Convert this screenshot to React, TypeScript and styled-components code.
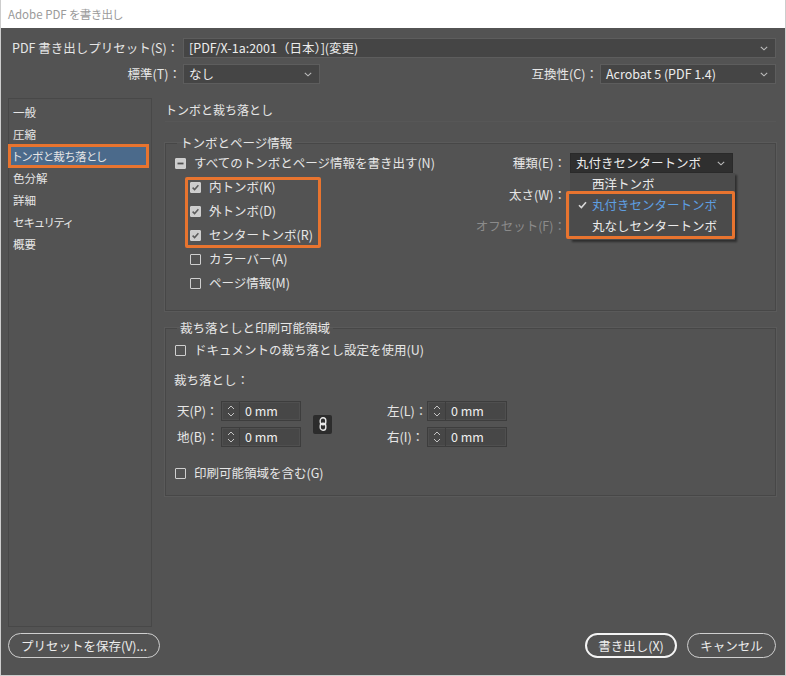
import React from "react";
import styled, { createGlobalStyle } from "styled-components";

const ORANGE = "#e8742f";

const GlobalStyle = createGlobalStyle`
  html, body { margin: 0; padding: 0; background: #ffffff; }
  body {
    font-family: "Noto Sans CJK JP", "Noto Sans", sans-serif;
  }
  #root { width: 786px; height: 676px; }
`;

const Window = styled.div`
  width: 786px;
  height: 676px;
  box-sizing: border-box;
  border: 1px solid #cdcdcd;
  border-top: none;
  display: flex;
  flex-direction: column;
  background: #535353;
  color: #e6e6e6;
  font-size: 12.5px;
  line-height: 16px;
`;

const TitleBar = styled.div`
  height: 28px;
  flex: none;
  background: #ffffff;
  display: flex;
  align-items: center;
  padding-left: 7px;
  color: #9a9a9a;
  font-size: 11.5px;
  font-feature-settings: "palt";
`;

const Header = styled.div`
  display: grid;
  grid-template-columns: 171px 137px 1fr 176px;
  grid-auto-rows: 20px;
  column-gap: 2px;
  row-gap: 6px;
  padding: 10px 9px 0 9px;
  align-items: center;
`;

const FieldLabel = styled.div<{ $align?: "left" | "right"; $dim?: boolean }>`
  text-align: ${(p) => p.$align ?? "right"};
  padding-left: ${(p) => (p.$align === "left" ? "2px" : "0")};
  white-space: nowrap;
  color: ${(p) => (p.$dim ? "#8b8b8b" : "#e6e6e6")};
`;

const SelectBox = styled.div<{ $span?: number; $dark?: boolean }>`
  grid-column: span ${(p) => p.$span ?? 1};
  position: relative;
  height: 20px;
  box-sizing: border-box;
  display: flex;
  align-items: center;
  justify-content: space-between;
  padding: 0 7px 0 5px;
  background: ${(p) => (p.$dark ? "#2f2f2f" : "#454545")};
  border: 1px solid ${(p) => (p.$dark ? "#2a2a2a" : "#5d5d5d")};
  color: #ececec;
  white-space: nowrap;
`;

const Chevron = () => (
  <svg width="8" height="5" viewBox="0 0 8 5">
    <polyline points="0.8,0.8 4,3.8 7.2,0.8" fill="none" stroke="#bdbdbd" strokeWidth="1.1" />
  </svg>
);

const Content = styled.div`
  flex: 1;
  display: grid;
  grid-template-columns: 144px 1fr;
  column-gap: 13px;
  padding: 14px 9px 0 7px;
  min-height: 0;
`;

const Sidebar = styled.div`
  border: 1px solid #484848;
  padding: 2px 3px 0 0;
  display: flex;
  flex-direction: column;
`;

const NavItem = styled.div<{ $active?: boolean }>`
  height: 22px;
  display: flex;
  align-items: center;
  padding-left: 4px;
  font-size: 11.5px;
  font-feature-settings: "palt";
  color: #e6e6e6;
  background: ${(p) => (p.$active ? "#4b6a8b" : "transparent")};
  outline: ${(p) => (p.$active ? `3px solid ${ORANGE}` : "none")};
  outline-offset: -2px;
`;

const Main = styled.div`
  display: flex;
  flex-direction: column;
`;

const PageTitle = styled.div`
  height: 23px;
  display: flex;
  align-items: center;
  border-bottom: 1px solid #575757;
  font-size: 12px;
`;

const Group = styled.fieldset<{ $mt: number }>`
  margin: ${(p) => p.$mt}px 0 0 0;
  padding: 0;
  border: 1px solid #474747;
  box-shadow: 0 0 0 1px #5a5a5a;
  min-width: 0;
`;

const Legend = styled.legend`
  margin-left: 11px;
  padding: 0 3px;
  line-height: 16px;
`;

const Group1Body = styled.div`
  display: flex;
  justify-content: space-between;
  padding: 0 42px 15px 9px;
`;

const Column = styled.div`
  display: flex;
  flex-direction: column;
`;

const CheckRow = styled.div<{ $indent?: boolean }>`
  height: 24px;
  display: flex;
  align-items: center;
  gap: 8px;
  padding-left: ${(p) => (p.$indent ? "15px" : "0")};
  white-space: nowrap;
`;

const Box = styled.span<{ $filled?: boolean }>`
  width: 11px;
  height: 11px;
  flex: none;
  box-sizing: border-box;
  border: 1px solid #cfcfcf;
  background: ${(p) => (p.$filled ? "#cdcdcd" : "transparent")};
  border-radius: 1px;
  display: flex;
  align-items: center;
  justify-content: center;
`;

type CheckState = "on" | "off" | "mixed";

const Checkbox = ({ state }: { state: CheckState }) => (
  <Box $filled={state !== "off"}>
    {state === "on" && (
      <svg width="9" height="9" viewBox="0 0 9 9">
        <polyline points="1.6,4.6 3.6,6.6 7.4,2.2" fill="none" stroke="#5b5b5b" strokeWidth="1.5" />
      </svg>
    )}
    {state === "mixed" && (
      <svg width="9" height="9" viewBox="0 0 9 9">
        <rect x="1.5" y="3.6" width="6" height="1.8" fill="#505050" />
      </svg>
    )}
  </Box>
);

const Check = ({ state, label, indent }: { state: CheckState; label: string; indent?: boolean }) => (
  <CheckRow $indent={indent}>
    <Checkbox state={state} />
    <span>{label}</span>
  </CheckRow>
);

const Highlighted = styled.div`
  position: relative;
  &::after {
    content: "";
    position: absolute;
    left: 10px;
    top: 2px;
    width: 136px;
    height: 71px;
    box-sizing: border-box;
    border: 3px solid ${ORANGE};
    border-radius: 2px;
    pointer-events: none;
  }
`;

const RightGrid = styled.div`
  display: grid;
  grid-template-columns: auto 163px;
  grid-auto-rows: 20px;
  column-gap: 4px;
  row-gap: 11.5px;
  margin-top: 2px;
  align-items: center;
`;

const Dropdown = styled.div`
  position: absolute;
  left: -1px;
  top: 19px;
  width: 165px;
  box-sizing: border-box;
  padding-bottom: 4px;
  background: #4b4b4b;
  box-shadow: 2px 2px 2px rgba(0, 0, 0, 0.45);
  z-index: 2;
`;

const Option = styled.div<{ $selected?: boolean }>`
  height: 21px;
  display: flex;
  align-items: center;
  color: ${(p) => (p.$selected ? "#5e9fe2" : "#ececec")};
`;

const CheckSlot = styled.span`
  width: 22px;
  flex: none;
  display: flex;
  justify-content: center;
  padding-left: 2px;
  box-sizing: border-box;
`;

const OptionHighlight = styled.div`
  position: relative;
  &::after {
    content: "";
    position: absolute;
    left: -4px;
    top: -3px;
    width: 169px;
    height: 48px;
    box-sizing: border-box;
    border: 3px solid ${ORANGE};
    border-radius: 2px;
    pointer-events: none;
  }
`;

const Placeholder = styled.div`
  height: 20px;
  background: #454545;
  border: 1px solid #5d5d5d;
  box-sizing: border-box;
`;

const Group2Body = styled.div`
  display: flex;
  flex-direction: column;
  padding: 2px 9px 10px 9px;
`;

const PlainRow = styled.div<{ $mt: number }>`
  height: 24px;
  display: flex;
  align-items: center;
  margin-top: ${(p) => p.$mt}px;
  margin-left: -1px;
`;

const SpinGrid = styled.div`
  display: grid;
  grid-template-columns: 46px 80px 84px 42px 80px;
  grid-template-rows: 20px 20px;
  row-gap: 6px;
  margin-top: 9px;
  align-items: center;
`;

const Spinner = styled.div`
  height: 20px;
  box-sizing: border-box;
  display: flex;
  align-items: stretch;
  background: #474747;
  border: 1px solid #3d3d3d;
  box-shadow: inset 0 0 0 1px #4f4f4f;
`;

const SpinArrows = styled.div`
  width: 17px;
  flex: none;
  border-right: 1px solid #3d3d3d;
  display: flex;
  align-items: center;
  justify-content: center;
`;

const SpinValue = styled.div`
  display: flex;
  align-items: center;
  padding-left: 5px;
  color: #efefef;
`;

const SpinField = ({ value }: { value: string }) => (
  <Spinner>
    <SpinArrows>
      <svg width="8" height="14" viewBox="0 0 8 14">
        <polyline points="1,5 4,2 7,5" fill="none" stroke="#c4c4c4" strokeWidth="1" />
        <polyline points="1,9 4,12 7,9" fill="none" stroke="#c4c4c4" strokeWidth="1" />
      </svg>
    </SpinArrows>
    <SpinValue>{value}</SpinValue>
  </Spinner>
);

const LinkButton = styled.div`
  grid-column: 3;
  grid-row: 1 / span 2;
  justify-self: start;
  margin-left: 12px;
  width: 19px;
  height: 19px;
  border-radius: 2px;
  background: #2c2c2c;
  display: flex;
  align-items: center;
  justify-content: center;
`;

const CheckRowSpaced = styled.div`
  margin-top: 14px;
`;

const Footer = styled.div`
  flex: none;
  display: flex;
  align-items: center;
  gap: 10px;
  padding: 6px 9px 17px 7px;
`;

const Pill = styled.button<{ $primary?: boolean; $w: number }>`
  height: 25px;
  width: ${(p) => p.$w}px;
  box-sizing: border-box;
  border-radius: 13px;
  background: transparent;
  border: ${(p) => (p.$primary ? "2px solid #f4f4f4" : "1px solid #cfcfcf")};
  color: #ececec;
  font-family: inherit;
  font-size: 12.5px;
  line-height: 16px;
  padding: 0;
  white-space: nowrap;
`;

const Spacer = styled.div`
  flex: 1;
`;

export default function App() {
  const nav = ["一般", "圧縮", "トンボと裁ち落とし", "色分解", "詳細", "セキュリティ", "概要"];
  return (
    <>
      <GlobalStyle />
      <Window>
        <TitleBar>Adobe PDF を書き出し</TitleBar>
        <Header>
          <FieldLabel $align="left">PDF 書き出しプリセット(S)：</FieldLabel>
          <SelectBox $span={3}>
            <span>[PDF/X-1a:2001（日本）](変更)</span>
            <Chevron />
          </SelectBox>
          <FieldLabel>標準(T)：</FieldLabel>
          <SelectBox>
            <span>なし</span>
            <Chevron />
          </SelectBox>
          <FieldLabel>互換性(C)：</FieldLabel>
          <SelectBox>
            <span>Acrobat 5 (PDF 1.4)</span>
            <Chevron />
          </SelectBox>
        </Header>
        <Content>
          <Sidebar>
            {nav.map((n, i) => (
              <NavItem key={n} $active={i === 2}>
                {n}
              </NavItem>
            ))}
          </Sidebar>
          <Main>
            <PageTitle>トンボと裁ち落とし</PageTitle>
            <Group $mt={13}>
              <Legend>トンボとページ情報</Legend>
              <Group1Body>
                <Column>
                  <Check state="mixed" label="すべてのトンボとページ情報を書き出す(N)" />
                  <Highlighted>
                    <Check state="on" label="内トンボ(K)" indent />
                    <Check state="on" label="外トンボ(D)" indent />
                    <Check state="on" label="センタートンボ(R)" indent />
                  </Highlighted>
                  <Check state="off" label="カラーバー(A)" indent />
                  <Check state="off" label="ページ情報(M)" indent />
                </Column>
                <RightGrid>
                  <FieldLabel>種類(E)：</FieldLabel>
                  <SelectBox $dark>
                    <span>丸付きセンタートンボ</span>
                    <Chevron />
                    <Dropdown>
                      <Option>
                        <CheckSlot />
                        西洋トンボ
                      </Option>
                      <OptionHighlight>
                        <Option $selected>
                          <CheckSlot>
                            <svg width="9" height="8" viewBox="0 0 9 8">
                              <polyline points="1,4.2 3.4,6.6 8,1.2" fill="none" stroke="#d8d8d8" strokeWidth="1.6" />
                            </svg>
                          </CheckSlot>
                          丸付きセンタートンボ
                        </Option>
                        <Option>
                          <CheckSlot />
                          丸なしセンタートンボ
                        </Option>
                      </OptionHighlight>
                    </Dropdown>
                  </SelectBox>
                  <FieldLabel>太さ(W)：</FieldLabel>
                  <Placeholder />
                  <FieldLabel $dim>オフセット(F)：</FieldLabel>
                  <Placeholder />
                </RightGrid>
              </Group1Body>
            </Group>
            <Group $mt={9}>
              <Legend>裁ち落としと印刷可能領域</Legend>
              <Group2Body>
                <Check state="off" label="ドキュメントの裁ち落とし設定を使用(U)" />
                <PlainRow $mt={6}>裁ち落とし：</PlainRow>
                <SpinGrid>
                  <FieldLabel $align="left">天(P)：</FieldLabel>
                  <SpinField value="0 mm" />
                  <LinkButton>
                    <svg width="8" height="14" viewBox="0 0 8 14">
                      <rect x="1.2" y="0.8" width="5.6" height="7" rx="2.8" fill="none" stroke="#e8e8e8" strokeWidth="1.4" />
                      <rect x="1.2" y="6.2" width="5.6" height="7" rx="2.8" fill="none" stroke="#e8e8e8" strokeWidth="1.4" />
                    </svg>
                  </LinkButton>
                  <FieldLabel $align="left">左(L)：</FieldLabel>
                  <SpinField value="0 mm" />
                  <FieldLabel $align="left">地(B)：</FieldLabel>
                  <SpinField value="0 mm" />
                  <FieldLabel $align="left" style={{ gridColumn: 4 }}>右(I)：</FieldLabel>
                  <SpinField value="0 mm" />
                </SpinGrid>
                <CheckRowSpaced>
                  <Check state="off" label="印刷可能領域を含む(G)" />
                </CheckRowSpaced>
              </Group2Body>
            </Group>
          </Main>
        </Content>
        <Footer>
          <Pill $w={152}>プリセットを保存(V)...</Pill>
          <Spacer />
          <Pill $primary $w={92}>書き出し(X)</Pill>
          <Pill $w={89}>キャンセル</Pill>
        </Footer>
      </Window>
    </>
  );
}
